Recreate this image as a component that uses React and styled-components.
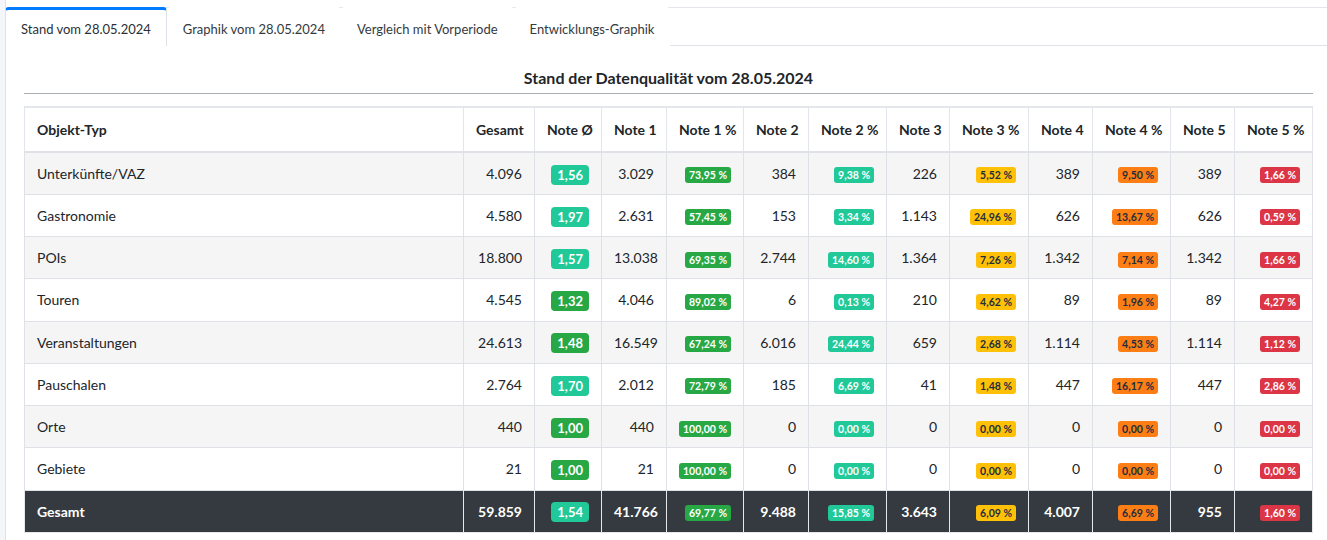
import React from "react";
import styled, { createGlobalStyle } from "styled-components";

const Global = createGlobalStyle`
  html, body { margin: 0; padding: 0; background: #ffffff; }
  body { font-family: Lato, "Liberation Sans", sans-serif; color: #212529; font-size: 14px; }
  * { box-sizing: border-box; }
`;

const Page = styled.div`
  display: flex;
  min-height: 540px;
  background: #f4f6f9;
  padding-left: 5px;
`;

const Card = styled.div`
  flex: 1;
  background: #fff;
  border-left: 1px solid #dee2e6;
  padding-top: 7px;
`;

const TabNav = styled.ul`
  display: flex;
  margin: 0;
  padding: 0;
  list-style: none;
  border-top: 1px solid #e3e6ea;
  border-bottom: 1px solid #dee2e6;
  height: 39px;
`;

const Tab = styled.li`
  padding: 1px 15px 0;
  height: 39px;
  display: flex;
  align-items: center;
  font-size: 13px;
  color: ${(p) => (p.$active ? "#2b3035" : "#343a40")};
  background: #fff;
  border: 1px solid ${(p) => (p.$active ? "#dee2e6" : "transparent")};
  border-top: 3px solid ${(p) => (p.$active ? "#007bff" : "transparent")};
  border-bottom: none;
  border-top-left-radius: 4px;
  border-top-right-radius: 4px;
  margin-top: -1px;
  margin-left: ${(p) => (p.$first ? "-1px" : "0")};
`;

const Body = styled.div`
  padding: 20px 15px 0 18px;
`;

const Title = styled.h5`
  margin: 0;
  text-align: center;
  font-size: 16px;
  font-weight: 700;
  line-height: 24px;
  padding-bottom: 3px;
  border-bottom: 1px solid #a8adb2;
  color: #212529;
`;

const Table = styled.table`
  margin-top: 12px;
  width: 100%;
  table-layout: fixed;
  border-collapse: collapse;
  border: 1px solid #dee2e6;
  border-top: 2px solid #e3e6ea;
  font-size: 14px;
`;

const Th = styled.th`
  padding: 11px 12px;
  line-height: 21px;
  font-weight: 700;
  text-align: ${(p) => (p.$left ? "left" : "right")};
  border: 1px solid #e2e5e9;
  border-bottom: 2px solid #dee2e6;
  white-space: nowrap;
  color: #212529;
`;

const Row = styled.tr`
  background: ${(p) => (p.$total ? "#343a40" : p.$striped ? "#f5f5f5" : "#fff")};
  color: ${(p) => (p.$total ? "#fff" : "#212529")};
  font-weight: ${(p) => (p.$total ? 700 : 400)};
`;

const Td = styled.td`
  height: 42.25px;
  padding: 0 12px;
  line-height: 21px;
  vertical-align: middle;
  text-align: ${(p) => (p.$left ? "left" : "right")};
  border: 1px solid ${(p) => (p.$total ? "#e5e7ea" : "#dee2e6")};
  white-space: nowrap;
`;

const COLORS = {
  green: { bg: "#28a745", fg: "#fff" },
  teal: { bg: "#20c997", fg: "#fff" },
  yellow: { bg: "#ffc107", fg: "#1f2d3d" },
  orange: { bg: "#fd7e14", fg: "#1f2d3d" },
  red: { bg: "#dc3545", fg: "#fff" },
};

const Badge = styled.span`
  display: inline-block;
  background: ${(p) => COLORS[p.$color].bg};
  color: ${(p) => COLORS[p.$color].fg};
  font-weight: 700;
  border-radius: ${(p) => (p.$big ? "4px" : "3px")};
  font-size: ${(p) => (p.$big ? "13px" : "10.5px")};
  line-height: ${(p) => (p.$big ? "13px" : "11px")};
  padding: ${(p) => (p.$big ? "4px 6px 3px" : "3px 4px 2px")};
  vertical-align: middle;
  white-space: nowrap;
`;

const widths = [439, 71, 67, 65, 77, 65, 78, 63, 79, 64, 78, 64, 78];
const headers = [
  "Objekt-Typ",
  "Gesamt",
  "Note Ø",
  "Note 1",
  "Note 1 %",
  "Note 2",
  "Note 2 %",
  "Note 3",
  "Note 3 %",
  "Note 4",
  "Note 4 %",
  "Note 5",
  "Note 5 %",
];

const rows = [
  ["Unterkünfte/VAZ", "4.096", "1,56", "3.029", "73,95", "384", "9,38", "226", "5,52", "389", "9,50", "389", "1,66"],
  ["Gastronomie", "4.580", "1,97", "2.631", "57,45", "153", "3,34", "1.143", "24,96", "626", "13,67", "626", "0,59"],
  ["POIs", "18.800", "1,57", "13.038", "69,35", "2.744", "14,60", "1.364", "7,26", "1.342", "7,14", "1.342", "1,66"],
  ["Touren", "4.545", "1,32", "4.046", "89,02", "6", "0,13", "210", "4,62", "89", "1,96", "89", "4,27"],
  ["Veranstaltungen", "24.613", "1,48", "16.549", "67,24", "6.016", "24,44", "659", "2,68", "1.114", "4,53", "1.114", "1,12"],
  ["Pauschalen", "2.764", "1,70", "2.012", "72,79", "185", "6,69", "41", "1,48", "447", "16,17", "447", "2,86"],
  ["Orte", "440", "1,00", "440", "100,00", "0", "0,00", "0", "0,00", "0", "0,00", "0", "0,00"],
  ["Gebiete", "21", "1,00", "21", "100,00", "0", "0,00", "0", "0,00", "0", "0,00", "0", "0,00"],
];
const total = ["Gesamt", "59.859", "1,54", "41.766", "69,77", "9.488", "15,85", "3.643", "6,09", "4.007", "6,69", "955", "1,60"];

const pctColors = { 4: "green", 6: "teal", 8: "yellow", 10: "orange", 12: "red" };

function avgColor(v) {
  const n = parseFloat(v.replace(",", "."));
  return n < 1.5 ? "green" : "teal";
}

function Cells({ data, isTotal }) {
  return data.map((v, i) => {
    let content = v;
    if (i === 2) content = <Badge $big $color={avgColor(v)}>{v}</Badge>;
    else if (pctColors[i]) content = <Badge $color={pctColors[i]}>{v} %</Badge>;
    return (
      <Td key={i} $left={i === 0} $total={isTotal}>
        {content}
      </Td>
    );
  });
}

export default function App() {
  return (
    <>
      <Global />
      <Page>
        <Card>
          <TabNav>
            <Tab $active $first>Stand vom 28.05.2024</Tab>
            <Tab>Graphik vom 28.05.2024</Tab>
            <Tab>Vergleich mit Vorperiode</Tab>
            <Tab>Entwicklungs-Graphik</Tab>
          </TabNav>
          <Body>
            <Title>Stand der Datenqualität vom 28.05.2024</Title>
            <Table>
              <colgroup>
                {widths.map((w, i) => (
                  <col key={i} style={{ width: w }} />
                ))}
              </colgroup>
              <thead>
                <tr>
                  {headers.map((h, i) => (
                    <Th key={i} $left={i === 0}>{h}</Th>
                  ))}
                </tr>
              </thead>
              <tbody>
                {rows.map((r, idx) => (
                  <Row key={idx} $striped={idx % 2 === 0}>
                    <Cells data={r} />
                  </Row>
                ))}
                <Row $total>
                  <Cells data={total} isTotal />
                </Row>
              </tbody>
            </Table>
          </Body>
        </Card>
      </Page>
    </>
  );
}
